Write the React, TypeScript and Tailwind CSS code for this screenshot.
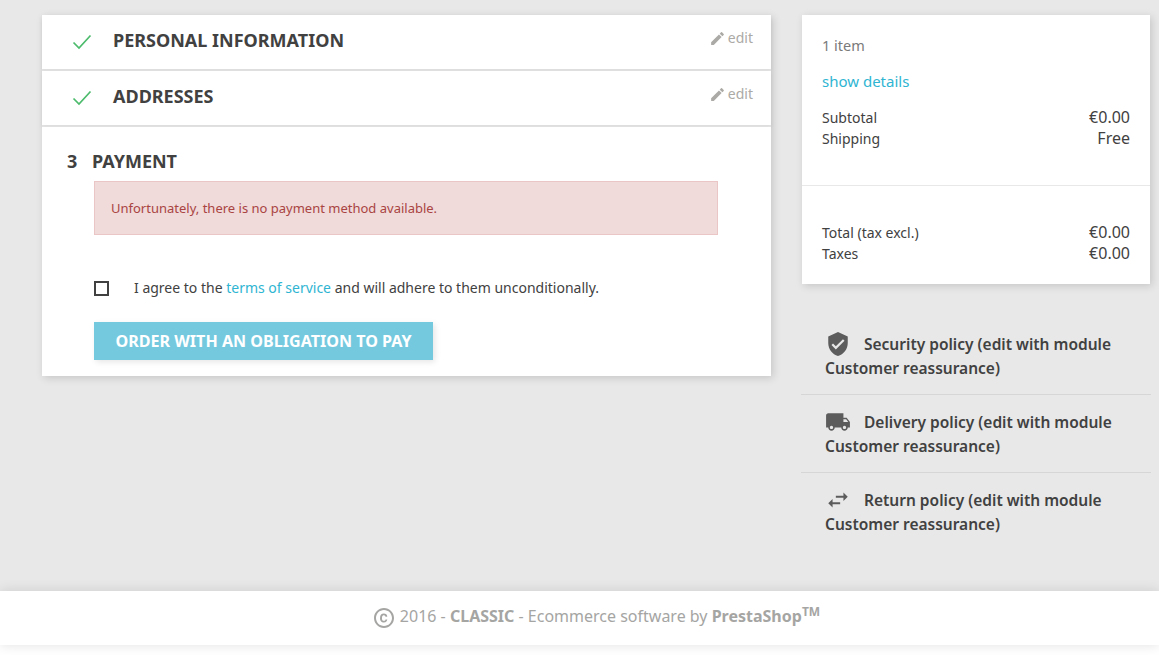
import { MdCopyright, MdEdit, MdLocalShipping, MdSwapHoriz, MdVerifiedUser } from 'react-icons/md';

function Check() {
    return (
        <svg width="20" height="16" viewBox="0 0 20 16" fill="none" className="text-[#4cbb6c]">
            <path d="M1.5 8.5 L7 14 L18.5 1.5" stroke="currentColor" strokeWidth="1.7" />
        </svg>
    );
}

function DoneStep({ title }: { title: string }) {
    return (
        <div className="h-[54px] bg-white flex items-start shadow-[0_2px_4px_rgba(0,0,0,0.06)]">
            <div className="ml-[30px] mt-[19px] w-[41px]">
                <Check />
            </div>
            <h1 className="mt-[11px] text-[18px] leading-[28px] font-bold text-[#414141]">{title}</h1>
            <div className="ml-auto mr-[18px] mt-[14px] flex items-center text-[14px] leading-[18px] text-[#acaaa6]">
                <MdEdit className="text-[17px] mr-[2px]" />
                edit
            </div>
        </div>
    );
}

function Row({ label, value }: { label: string; value: string }) {
    return (
        <div className="flex justify-between h-[21px] leading-[21px]">
            <span className="text-[14px]">{label}</span>
            <span className="text-[16px]">{value}</span>
        </div>
    );
}

const policies = [
    { icon: MdVerifiedUser, label: 'Security policy' },
    { icon: MdLocalShipping, label: 'Delivery policy' },
    { icon: MdSwapHoriz, label: 'Return policy' }
];

export default function App() {
    return (
        <div className="w-[1159px] h-[655px] overflow-hidden bg-[#e8e8e8] font-['Noto_Sans',sans-serif] flex flex-col">
            <div className="h-[591px] flex items-start pt-[15px] pl-[42px]">
                <div className="w-[729px] flex flex-col gap-[2px] shadow-[2px_2px_8px_0_rgba(0,0,0,0.15)]">
                    <DoneStep title="PERSONAL INFORMATION" />
                    <DoneStep title="ADDRESSES" />
                    <div className="h-[249px] bg-white pt-[20px] pl-[25px]">
                        <h1 className="text-[18px] leading-[28px] font-bold text-[#414141] flex">
                            <span className="w-[25px]">3</span>
                            PAYMENT
                        </h1>
                        <div className="ml-[27px] mt-[6px] w-[624px] h-[54px] bg-[#f0dada] border border-[#ebc6c6] pl-[16px] pt-[17px] text-[13px] leading-[18px] text-[#a94442]">
                            Unfortunately, there is no payment method available.
                        </div>
                        <div className="ml-[27px] mt-[44px] flex items-center h-[18px] text-[14px] text-[#414141]">
                            <span className="w-[15px] h-[15px] border-2 border-[#414141] mr-[25px]"></span>
                            <span className="-mt-[2px]">
                                I agree to the <span className="text-[#2fb5d2]">terms of service</span> and will adhere to them unconditionally.
                            </span>
                        </div>
                        <div className="ml-[27px] mt-[25px] w-[339px] h-[38px] bg-[#74c9df] shadow-[2px_2px_6px_rgba(0,0,0,0.1)] flex items-center justify-center text-[16.1px] font-bold text-white">
                            ORDER WITH AN OBLIGATION TO PAY
                        </div>
                    </div>
                </div>
                <div className="ml-[31px] w-[348px]">
                    <div className="h-[269px] bg-white shadow-[2px_2px_8px_0_rgba(0,0,0,0.15)] text-[#414141]">
                        <div className="h-[171px] border-b border-[#e8e8e8] px-[20px] pt-[20px]">
                            <p className="text-[#7a7a7a] text-[14.5px] leading-[20px]">1 item</p>
                            <p className="mt-[16px] text-[#2fb5d2] text-[15px] leading-[20px]">show details</p>
                            <div className="mt-[16px]">
                                <Row label="Subtotal" value="€0.00" />
                                <Row label="Shipping" value="Free" />
                            </div>
                        </div>
                        <div className="px-[20px] pt-[36px]">
                            <Row label="Total (tax excl.)" value="€0.00" />
                            <Row label="Taxes" value="€0.00" />
                        </div>
                    </div>
                    <div className="mt-[33px] -ml-[1px] w-[350px]">
                        {policies.map((p, i) => (
                            <div key={p.label} className={`h-[78px] pl-[24px] pt-[13px] text-[15.5px] leading-[24px] font-semibold text-[#414141] ${i < 2 ? 'border-b border-[#d6d6d6]' : ''}`}>
                                <p.icon className="inline-block relative top-[1px] align-[-6px] text-[26px] text-[#5c5c5c] mr-[13px]" />
                                {`${p.label} (edit with module Customer reassurance)`}
                            </div>
                        ))}
                    </div>
                </div>
            </div>
            <div className="relative z-10 h-[54px] bg-white shadow-[0_0_12px_rgba(0,0,0,0.12)] flex items-center justify-center text-[16px] text-[#a5a5a3] pb-[5px] pl-[33px]">
                <MdCopyright className="text-[24px] mr-[4px] mt-[4px]" />
                <span>
                    2016 - <b className="font-bold">CLASSIC</b> - Ecommerce software by <b className="font-bold">PrestaShop</b>
                    <sup className="font-bold text-[12px]">TM</sup>
                </span>
            </div>
            <div className="flex-1 bg-white"></div>
        </div>
    );
}
